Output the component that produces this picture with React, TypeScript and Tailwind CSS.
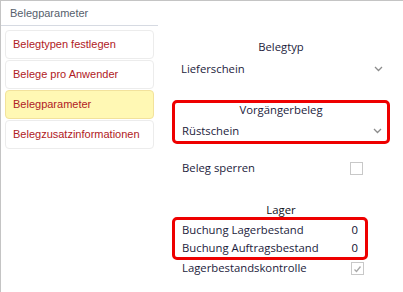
import * as React from "react";

const navItems = [
  "Belegtypen festlegen",
  "Belege pro Anwender",
  "Belegparameter",
  "Belegzusatzinformationen",
];

function Chevron() {
  return (
    <svg width="9" height="6" viewBox="0 0 9 6" className="shrink-0">
      <polyline points="1,1 4.5,4.5 8,1" fill="none" stroke="#8c8c8c" strokeWidth="1.3" />
    </svg>
  );
}

function Checkbox({ checked }: { checked?: boolean }) {
  return (
    <div className="flex h-[13px] w-[13px] items-center justify-center border border-[#c8c8c8] bg-white">
      {checked && (
        <svg width="9" height="8" viewBox="0 0 9 8">
          <polyline points="1.5,4.5 3.5,6.5 7.5,1.5" fill="none" stroke="#a8a8a8" strokeWidth="1.3" />
        </svg>
      )}
    </div>
  );
}

export default function App() {
  const selected = "Belegparameter";

  return (
    <div className="flex h-[292px] w-[403px] border-l border-t border-[#c4c4c4] bg-white">
      {/* linke Navigation */}
      <div
        className="flex w-[157px] shrink-0 flex-col text-[11px]"
        style={{ fontFamily: '"Liberation Sans", Arial, sans-serif' }}
      >
        <div className="flex h-[25px] items-center border-b border-[#d6dae2] pl-[9px] text-[#56606c]">
          Belegparameter
        </div>
        <div className="flex flex-col gap-[1px] px-[4px] pt-[4px]">
          {navItems.map((item) => (
            <div
              key={item}
              className={
                item === selected
                  ? "flex h-[29px] items-center rounded-[4px] border border-[#f2e29c] bg-[#fff8b4] pl-[7px] text-[#b02024]"
                  : "flex h-[29px] items-center rounded-[4px] border border-[#ececec] bg-white pl-[7px] text-[#b02024]"
              }
            >
              {item}
            </div>
          ))}
        </div>
      </div>

      {/* rechter Bereich */}
      <div
        className="flex flex-1 flex-col pl-[14px] pr-[12px] pt-[37px] text-[11.3px] text-[#1c1c3c]"
        style={{ fontFamily: '"Open Sans", "Noto Sans", sans-serif' }}
      >
        <div className="w-[218px]">
          <div className="h-[18px] text-center leading-[18px]">Belegtyp</div>
          <div className="mt-[2px] flex h-[22px] items-center justify-between pl-[9px] pr-[7px]">
            <span>Lieferschein</span>
            <Chevron />
          </div>
        </div>

        <div className="mt-[20px] box-border h-[44px] w-[218px] rounded-[5px] border-[3px] border-[#ee0000]">
          <div className="h-[14px] text-center leading-[14px]">Vorgängerbeleg</div>
          <div className="mt-[3px] flex h-[22px] items-center justify-between pl-[7px] pr-[5px]">
            <span>Rüstschein</span>
            <Chevron />
          </div>
        </div>

        <div className="mt-[14px] flex h-[20px] w-[191px] items-center justify-between pl-[10px]">
          <span>Beleg sperren</span>
          <Checkbox />
        </div>

        <div className="mt-[24px] h-[16px] w-[218px] text-center leading-[16px] text-[#101020]">Lager</div>

        <div className="-mt-[1px] box-border flex h-[43px] w-[196px] flex-col rounded-[5px] border-[3px] border-[#ee0000] px-[7px]">
          <div className="mt-[2px] flex h-[19px] items-center justify-between">
            <span>Buchung Lagerbestand</span>
            <span className="text-[#101030]">0</span>
          </div>
          <div className="flex h-[19px] items-center justify-between">
            <span>Buchung Auftragsbestand</span>
            <span className="text-[#101030]">0</span>
          </div>
        </div>

        <div className="flex h-[17px] w-[192px] items-center justify-between pl-[10px]">
          <span>Lagerbestandskontrolle</span>
          <Checkbox checked />
        </div>
      </div>
    </div>
  );
}
